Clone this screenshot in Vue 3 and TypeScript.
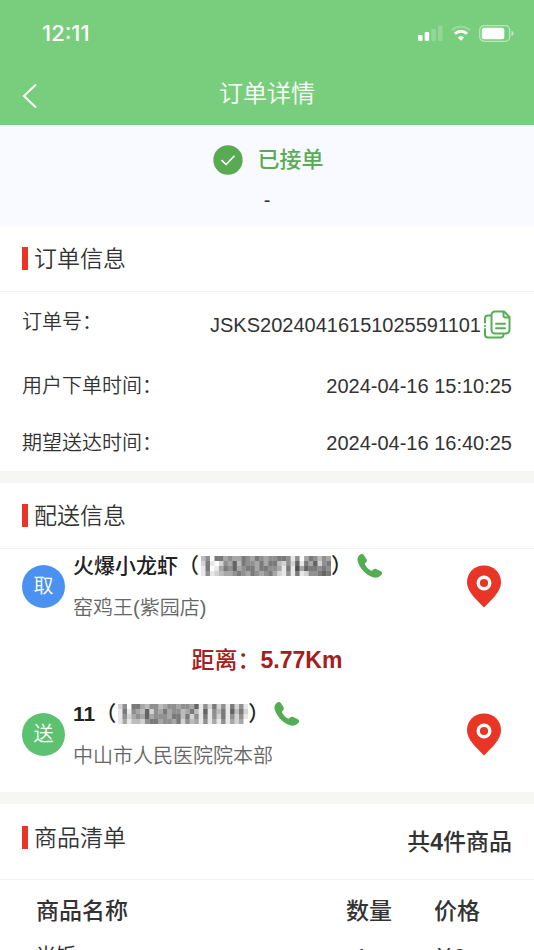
<script setup lang="ts">
interface Stop {
  badge: string
  kind: 'pickup' | 'dropoff'
  name: string
  address: string
  mask: string[]
}

interface Item {
  name: string
  count: number
  price: string
}

const orderNo = 'JSKS20240416151025591101'
const times = [
  { label: '用户下单时间', value: '2024-04-16 15:10:25' },
  { label: '期望送达时间', value: '2024-04-16 16:40:25' },
]

// Hidden phone numbers: each digit is the darkness level of one mosaic cell.
const pickup: Stop = {
  badge: '取',
  kind: 'pickup',
  name: '火爆小龙虾',
  address: '窑鸡王(紫园店)',
  mask: [
    '35066454465465455665150465354',
    '26102547365546466325271647256',
    '16014657456646655416184766565',
    '15123445654654564215161255676',
  ],
}
const dropoff: Stop = {
  badge: '送',
  kind: 'dropoff',
  name: '11',
  address: '中山市人民医院院本部',
  mask: [
    '25066435534554554715262516251',
    '16154372546455346317153617362',
    '15245474555466362516152615251',
    '14133256645546253415141514240',
  ],
}

const items: Item[] = [{ name: '米饭', count: 1, price: '￥2' }]

function cells(mask: string[]) {
  return mask.flatMap((row, y) =>
    [...row].map((level, x) => ({ x, y, opacity: Number(level) / 10 })),
  )
}

function isNumeric(name: string) {
  return /^\d+$/.test(name)
}
</script>

<template>
  <div class="page">
    <header class="top">
      <div class="statusbar">
        <span class="clock">12:11</span>
        <div class="indicators">
          <svg width="25" height="16" viewBox="0 0 25 16" fill="#fff" aria-hidden="true">
            <rect x="0" y="10" width="4.5" height="6" rx="1.2" />
            <rect x="6.7" y="7" width="4.5" height="9" rx="1.2" />
            <rect x="13.4" y="4" width="4.5" height="12" rx="1.2" opacity=".2" />
            <rect x="20" y="0.5" width="4.5" height="15.5" rx="1.2" opacity=".2" />
          </svg>
          <svg width="20" height="16" viewBox="0 0 20 16" fill="none" stroke="#fff" aria-hidden="true">
            <path d="M1 5.2a13 13 0 0 1 18 0" stroke-width="2.4" opacity=".25" />
            <path d="M4 8.8a8.500 8.500 0 0 1 12 0" stroke-width="3" />
            <path d="M10 15.800l-3.200-3.200a4.600 4.600 0 0 1 6.400 0z" fill="#fff" stroke="none" />
          </svg>
          <svg width="35" height="17" viewBox="0 0 35 17" aria-hidden="true">
            <rect x="0.7" y="0.7" width="30" height="15.6" rx="4.5" fill="none" stroke="#fff" stroke-width="1.2" opacity=".5" />
            <rect x="2.8" y="2.8" width="22.5" height="11.4" rx="2.5" fill="#fff" />
            <path d="M32.5 5.8q2 .8 2 2.7t-2 2.7z" fill="#fff" opacity=".6" />
          </svg>
        </div>
      </div>
      <div class="navbar">
        <button type="button" aria-label="返回">
          <svg width="16" height="26" viewBox="0 0 16 26" fill="none" stroke="#fff" stroke-width="2">
            <path d="M14 1.5L2 13l12 11.5" />
          </svg>
        </button>
        <h1>订单详情</h1>
      </div>
    </header>

    <section class="state">
      <div class="state-line">
        <svg width="30" height="30" viewBox="0 0 30 30" aria-hidden="true">
          <circle cx="15" cy="15" r="14.7" fill="#58ab53" />
          <path d="M8.5 15.2l4.6 4.3 8.4-8.7" fill="none" stroke="#fff" stroke-width="1.6" />
        </svg>
        <strong>已接单</strong>
      </div>
      <p>-</p>
    </section>

    <section class="card">
      <div class="heading"><h2>订单信息</h2></div>
      <dl>
        <div class="fact first">
          <dt>订单号：</dt>
          <dd>
            {{ orderNo }}
            <button type="button" aria-label="复制订单号">
              <svg width="28" height="29" viewBox="0 0 28 29" fill="none" stroke="#58ad54" stroke-width="2" stroke-linecap="round" stroke-linejoin="round">
                <path d="M11 1.5h9l5.5 5.5V20a3.500 3.500 0 0 1-3.500 3.500H11A3.500 3.500 0 0 1 7.500 20V5A3.500 3.500 0 0 1 11 1.500z" />
                <path d="M19.500 2v3.500a2 2 0 0 0 2 2h3.500" />
                <path d="M12 13.700h9M12 18.300h9" />
                <path d="M7 5.500H4A3 3 0 0 0 1 8.500v4M1 15.700v.2M1 19v5.500a3 3 0 0 0 3 3h12.500a3 3 0 0 0 3-3V24" />
              </svg>
            </button>
          </dd>
        </div>
        <div v-for="t in times" :key="t.label" class="fact">
          <dt>{{ t.label }}：</dt>
          <dd>{{ t.value }}</dd>
        </div>
      </dl>
    </section>

    <section class="card">
      <div class="heading"><h2>配送信息</h2></div>
      <div class="route">
        <template v-for="stop in [pickup, dropoff]" :key="stop.kind">
          <p v-if="stop.kind === 'dropoff'" class="distance">距离：<b>5.77Km</b></p>
          <div class="stop">
            <span class="badge" :class="stop.kind">{{ stop.badge }}</span>
            <div class="who">
              <div class="name">
                <span><span :class="{ numeric: isNumeric(stop.name) }">{{ stop.name }}</span>（</span>
                <svg class="mask" width="130" height="20" viewBox="0 0 29 4" preserveAspectRatio="none" aria-hidden="true">
                  <rect v-for="c in cells(stop.mask)" :key="`${c.x}-${c.y}`" :x="c.x" :y="c.y" width="1" height="1" fill="#222" :fill-opacity="c.opacity" />
                </svg>
                <span class="close">）</span>
                <button type="button" aria-label="拨打电话">
                  <svg width="26" height="26" viewBox="0 0 26 26">
                    <path d="M2.200 2.300C3.800.8 5.800.7 7 2.200l2.400 3.700c.9 1.400.5 2.800-.8 3.900-.8.7-.8 1.300-.3 2.200 1.200 2.200 3 4 5.200 5.300.9.5 1.500.5 2.200-.3 1.100-1.300 2.500-1.700 3.900-.8l4.300 2c1.500 1.100 1.600 2.500.4 3.900-2 2.200-5 3.200-8.300 2.200C9.200 22.300 3.200 16 .8 8.800.1 6.300.5 4 2.200 2.300z" fill="#55ad53" />
                  </svg>
                </button>
              </div>
              <div class="address">{{ stop.address }}</div>
            </div>
            <button type="button" aria-label="查看位置">
              <svg width="36" height="43" viewBox="0 0 36 43">
                <path d="M18 .5C8.3.5 1 7.800 1 17c0 6 3.400 10.900 7.500 15.700L18 42.500l9.500-9.800C31.600 27.900 35 23 35 17 35 7.800 27.700.5 18 .5z" fill="#e93526" />
                <circle cx="18" cy="18" r="5.800" fill="none" stroke="#fff" stroke-width="3.400" />
              </svg>
            </button>
          </div>
        </template>
      </div>
    </section>

    <section class="card">
      <div class="heading tall">
        <h2>商品清单</h2>
        <strong>共<b>4</b>件商品</strong>
      </div>
      <table>
        <thead>
          <tr><th>商品名称</th><th>数量</th><th>价格</th></tr>
        </thead>
        <tbody>
          <tr v-for="item in items" :key="item.name">
            <td>{{ item.name }}</td>
            <td class="count">{{ item.count }}</td>
            <td>{{ item.price }}</td>
          </tr>
        </tbody>
      </table>
    </section>
  </div>
</template>

<style>
body {
  margin: 0;
  background: #f6f6f5;
}
</style>

<style scoped>
.page {
  height: 100vh;
  overflow: hidden;
  color: #333;
  background: #f6f6f5;
  font-family: "Liberation Sans", "Noto Sans CJK SC", sans-serif;
  font-size: 20px;
  line-height: 28px;
}
h1, h2, p, dl, dd {
  margin: 0;
}
h1, h2 {
  font-weight: 350;
}
b {
  font-weight: 700;
}
button {
  display: flex;
  padding: 0;
  border: 0;
  background: none;
  cursor: pointer;
}
svg {
  display: block;
  flex: none;
}
.top {
  color: #fff;
  background: #78ce7d;
}
.statusbar {
  display: flex;
  align-items: center;
  justify-content: space-between;
  height: 66px;
  padding: 0 20px 0 42px;
}
.clock {
  font-family: Inter, sans-serif;
  font-size: 22px;
  font-weight: 500;
}
.indicators {
  display: flex;
  align-items: center;
  gap: 8px;
}
.navbar {
  display: grid;
  grid-template-columns: 1fr auto 1fr;
  align-items: center;
  height: 59px;
  padding: 0 22px;
}
h1 {
  padding-bottom: 4px;
  font-size: 24px;
}
.state {
  height: 100px;
  padding-top: 1px;
  text-align: center;
  background: #f8faff;
}
.state-line {
  display: flex;
  align-items: center;
  justify-content: center;
  gap: 14px;
  height: 30px;
  padding: 19px 0 0 3px;
}
.state-line strong {
  color: #58ad54;
  font-size: 22px;
  font-weight: 500;
}
.state p {
  padding-top: 11px;
}
.card {
  margin-bottom: 11px;
  background: #fff;
}
.card + .card {
  margin-top: 12px;
}
.heading {
  display: flex;
  align-items: center;
  justify-content: space-between;
  height: 66px;
  box-sizing: border-box;
  padding: 0 22px;
  border-bottom: 1px solid #f2f2f2;
}
.heading h2 {
  display: flex;
  align-items: center;
  gap: 6px;
  font-size: 23px;
}
.heading h2::before {
  content: "";
  width: 6px;
  height: 23px;
  background: #e93526;
}
.heading strong {
  font-size: 23px;
  font-weight: 500;
}
.heading.tall {
  height: 76px;
}
.tall h2 {
  padding-bottom: 8px;
}
.fact {
  display: flex;
  align-items: center;
  justify-content: space-between;
  height: 57px;
  padding: 0 22px;
}
.first {
  height: 65px;
}
.first dt {
  padding-bottom: 6px;
}
.fact dt {
  font-weight: 350;
}
.fact dd {
  display: flex;
  align-items: center;
  gap: 3px;
}
.stop {
  display: flex;
  align-items: center;
  height: 74px;
  padding: 0 32px 0 22px;
}
.badge {
  flex: none;
  width: 43px;
  border-radius: 50%;
  color: #fff;
  font-weight: 350;
  line-height: 43px;
  text-align: center;
}
.pickup {
  background: #4b91f2;
}
.dropoff {
  background: #5cc271;
}
.who {
  flex: 1;
  padding-left: 8px;
}
.name {
  display: flex;
  align-items: center;
  height: 34px;
  color: #222;
  font-size: 21px;
  font-weight: 500;
}
.numeric {
  font-weight: 700;
}
.mask {
  margin-left: 2px;
}
.close {
  margin-right: 5px;
}
.address {
  height: 40px;
  color: #666;
  font-weight: 350;
  line-height: 50px;
}
.distance {
  height: 74px;
  color: #a3201c;
  font-size: 23px;
  font-weight: 500;
  line-height: 74px;
  text-align: center;
}
.route {
  padding-bottom: 21px;
}
table {
  width: 100%;
  border-collapse: collapse;
  table-layout: fixed;
}
th, td {
  padding: 0;
  text-align: left;
}
th {
  width: 88px;
  height: 62px;
  font-size: 23px;
  font-weight: 500;
}
th:last-child {
  width: 100px;
}
th:first-child {
  width: auto;
}
th:first-child, td:first-child {
  padding-left: 36px;
}
td {
  height: 28px;
  line-height: 24px;
}
.count {
  padding-left: 10px;
}
</style>
